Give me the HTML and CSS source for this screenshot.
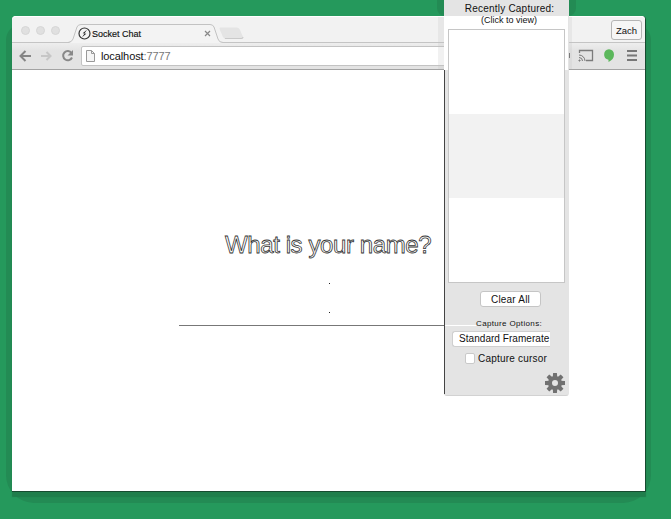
FILE: index.html
```html
<!DOCTYPE html>
<html lang="en">
<head>
<meta charset="utf-8">
<title>Socket Chat</title>
<link rel="stylesheet" href="styles.css">
</head>
<body>
<div class="desktop">
  <main class="browser">
    <header class="tabstrip">
      <div class="lights"><i></i><i></i><i></i></div>
      <div class="tab">
        <svg class="tab-shape" width="156" height="19" viewBox="0 0 156 19"><path class="tab-fill" d="M0 19 Q4 18 5 15 L9 3 Q10 .5 13 .5 H142 Q145 .5 146 3 L150 15 Q151 18.5 155 18.5 V19Z"/><path class="tab-line" d="M0 18.5 Q4 18 5 15 L9 3 Q10 .5 13 .5 H142 Q145 .5 146 3 L150 15 Q151 18.5 155 18.5"/></svg>
        <svg class="favicon" width="13" height="13" viewBox="0 0 13 13"><circle cx="6.5" cy="6.5" r="5.5" fill="#f3f3f3" stroke="#333" stroke-width="1.2"/><path d="M9 2.8 4.7 6.2 6.4 6.5Z M4 10.2 8.3 6.7 6.6 6.4Z" fill="#222"/></svg>
        <span class="tab-title">Socket Chat</span>
        <svg class="close" width="7" height="7" viewBox="0 0 7 7"><path d="M1 1 6 6M6 1 1 6" stroke="#888" stroke-width="1.2"/></svg>
      </div>
      <svg class="newtab" width="25" height="13" viewBox="0 0 25 13"><path d="M1 .5H18Q20 .5 21 3L24 10Q24.500 12 22 12H7Q5 12 4 10L1 3Q0 1 1 .5Z" fill="#e4e4e4"/><path d="M24 10Q24.500 11.500 22 11.500H6" fill="none" stroke="#c9c9c9"/></svg>
      <button class="user">Zach</button>
    </header>
    <nav class="toolbar">
      <svg class="nav-icons" width="70" height="20" viewBox="0 0 70 20" fill="none">
        <path d="M19 9H9M13.500 4 8.500 9 13.500 14" stroke="#858585" stroke-width="2"/>
        <path d="M29 9H38M34.500 5 38.500 9 34.500 13" stroke="#c6c6c6" stroke-width="2"/>
        <path d="M59.500 6A4.600 4.600 0 1 0 60 10.500" stroke="#888" stroke-width="2"/><path d="M61 3V8.500H55.500Z" fill="#888"/>
      </svg>
      <div class="address">
        <svg width="9" height="12" viewBox="0 0 9 12"><path d="M.5.5H5.500L8.500 3.500V11.500H.5Z" fill="#f5f5f5" stroke="#999"/><path d="M5.500.5V3.500H8.500" fill="none" stroke="#999"/></svg>
        <span>localhost<em>:7777</em></span>
      </div>
      <svg class="tools" width="72" height="20" viewBox="0 0 72 20" fill="none">
        <path d="M.5 7V12" stroke="#666"/>
        <path d="M10.500 7V4.500H23.500V14.500H17" stroke="#7b7b7b" stroke-width="1.300"/>
        <path d="M10 9A6 6 0 0 1 16 15M10 11.500A3.500 3.500 0 0 1 13.500 15M10 14H11V15H10Z" stroke="#777"/>
        <path d="M40 3.200A5.300 5.300 0 0 0 39.500 13.700V16Q45 13.500 45 8.500A5.200 5.200 0 0 0 40 3.200Z" fill="#5bb75b"/>
        <path d="M58 5H68M58 9.500H68M58 14H68" stroke="#777" stroke-width="2"/>
      </svg>
    </nav>
    <section class="page">
      <h1>What is your name?</h1>
      <i class="dot"></i><i class="dot dot-low"></i>
      <div class="line"></div>
    </section>
  </main>
  <div class="trail"></div>
  <aside class="capture">
    <div class="heading">Recently Captured:</div>
    <div class="hint">(Click to view)</div>
    <div class="shots"><div></div><div></div><div></div></div>
    <button class="clear">Clear All</button>
    <div class="options"><i></i><span>Capture Options:</span></div>
    <div class="rate">Standard Framerate</div>
    <label class="cursor"><i></i><span>Capture cursor</span></label>
    <svg class="gear" width="20" height="20" viewBox="-10 -10 20 20"><g fill="#717171"><path id="t" d="M-1.900-10H1.900L2.300-5H-2.300Z"/><use href="#t" transform="rotate(45)"/><use href="#t" transform="rotate(90)"/><use href="#t" transform="rotate(135)"/><use href="#t" transform="rotate(180)"/><use href="#t" transform="rotate(225)"/><use href="#t" transform="rotate(270)"/><use href="#t" transform="rotate(315)"/></g><circle r="5" fill="none" stroke="#717171" stroke-width="4"/></svg>
  </aside>
</div>
</body>
</html>
```
FILE: styles.css
```css
* { box-sizing: border-box; }
body { margin: 0; font-family: "Liberation Sans", Arial, sans-serif; color: #111; }
.desktop { position: relative; width: 671px; height: 519px; overflow: hidden; background: #25995c; white-space: nowrap; }
.desktop::before { content: ""; position: absolute; left: 6px; top: 24px; width: 645px; height: 479px; border-radius: 16px 16px 28px 28px; background: #238b54; }
.desktop::after { content: ""; position: absolute; left: 437px; top: 0; width: 139px; height: 16px; background: #238b54; border-radius: 0 0 8px 8px; }
.browser { position: absolute; left: 12px; top: 16px; width: 634px; height: 475px; border-radius: 4px 4px 0 0; background: #fff; border-right: 1px solid #174b30; box-shadow: 0 1px #174b30, 0 6px 1px #207e4c; display: flex; flex-direction: column; }
.tabstrip { height: 27px; flex: none; display: flex; align-items: flex-start; background: #f2f2f2; border-top: 1px solid #fff; border-bottom: 1px solid #c4c4c4; border-radius: 4px 4px 0 0; }
.lights { display: flex; gap: 6px; padding: 9px 0 0 9px; width: 56px; flex: none; }
.lights i { width: 9px; height: 9px; border-radius: 50%; background: #e0e0e0; border: 1px solid #d6d6d6; }
.tab { position: relative; width: 152px; height: 19px; margin-top: 7px; flex: none; display: flex; align-items: center; padding-left: 10px; }
.tab-shape { position: absolute; left: 0; top: 0; }
.tab-fill { fill: #f3f3f3; }
.tab-line { fill: none; stroke: #c2c2c2; }
.favicon { position: relative; flex: none; }
.tab-title { position: relative; font-size: 9px; letter-spacing: 0; margin-left: 1px; width: 112px; -webkit-text-stroke: .15px #111; }
.close { position: relative; flex: none; }
.newtab { margin: 10px 0 0 -1px; }
.user { margin: 3px 3px 0 auto; width: 31px; height: 20px; padding: 0; border: 1px solid #b5b5b5; border-radius: 3px; background: #f6f6f6; font: 9.5px "Liberation Sans", sans-serif; color: #111; }
.toolbar { height: 27px; flex: none; display: flex; align-items: center; background: linear-gradient(#eee, #e3e3e3 30%, #e3e3e3); border-bottom: 1px solid #a3a3a3; }
.nav-icons { flex: none; margin-top: 1px; }
.address { width: 484px; height: 20px; margin-left: -1px; background: #fff; border: 1px solid #c3c3c3; border-radius: 2px; display: flex; align-items: center; gap: 6px; padding-left: 4px; font-size: 11px; letter-spacing: -.1px; }
.address em { font-style: normal; color: #777; }
.tools { flex: none; margin-left: 4px; }
.page { flex: 1; display: flex; flex-direction: column; align-items: flex-start; }
h1 { margin: 160px 0 0 213px; height: 30px; width: 208px; font-size: 24px; line-height: 30px; font-weight: 400; letter-spacing: -.4px; color: #fff; -webkit-text-stroke: .8px #333; }
.dot { width: 1px; height: 1px; background: #222; margin: 23px 0 0 317px; }
.dot-low { margin-top: 28px; }
.line { width: 266px; height: 1px; background: #777; margin: 12px 0 0 167px; }
.trail { position: absolute; left: 438px; top: 17px; width: 134px; height: 52px; background: rgba(190, 190, 190, .22); }
.capture { position: absolute; z-index: 1; left: 444px; top: 0; width: 125px; height: 396px; display: flex; flex-direction: column; background: linear-gradient(#e4e4e4 16px, #fff 16px, #fff 70px, #e4e4e4 70px); border-right: 1px solid #e4e4e4; border-bottom: 1px solid #d2d2d2; border-radius: 0 0 3px 3px; }
.capture::before { content: ""; position: absolute; left: 0; top: 70px; width: 1px; height: 324px; background: #444; }
.heading { height: 15px; line-height: 17px; font-size: 10px; letter-spacing: .22px; text-align: center; padding-left: 7px; }
.hint { height: 14px; line-height: 10px; font-size: 9px; text-align: center; padding-left: 6px; }
.shots { margin-left: 4px; width: 117px; height: 254px; border: 1px solid #c6c6c6; background: #fff; display: grid; grid-template-rows: 84px 84px 84px; }
.shots div:nth-child(2) { background: #f2f2f2; }
.clear { margin: 8px 0 0 36px; width: 61px; height: 16px; padding: 0; border: 1px solid #c5c5c5; border-radius: 3px; background: #fff; font: 10px/13px "Liberation Sans", sans-serif; letter-spacing: .2px; color: #111; }
.options { height: 10px; margin-top: 12px; line-height: 10px; font-size: 8px; letter-spacing: .35px; display: flex; align-items: center; }
.options i { width: 32px; height: 1px; background: #fff; margin-top: 2px; }
.rate { margin: 2px 0 0 8px; width: 98px; height: 16px; padding-left: 6px; line-height: 14px; font-size: 10px; letter-spacing: .05px; background: #fff; border: 1px solid #cfcfcf; border-right: 0; border-radius: 3px 0 0 3px; }
.cursor { margin: 5px 0 0 21px; height: 12px; display: flex; align-items: center; gap: 3px; font-size: 10px; letter-spacing: .2px; }
.cursor i { width: 10px; height: 11px; border: 1px solid #c9c9c9; border-radius: 2px; background: #fff; }
.gear { margin: 9px 0 0 101px; }
```
